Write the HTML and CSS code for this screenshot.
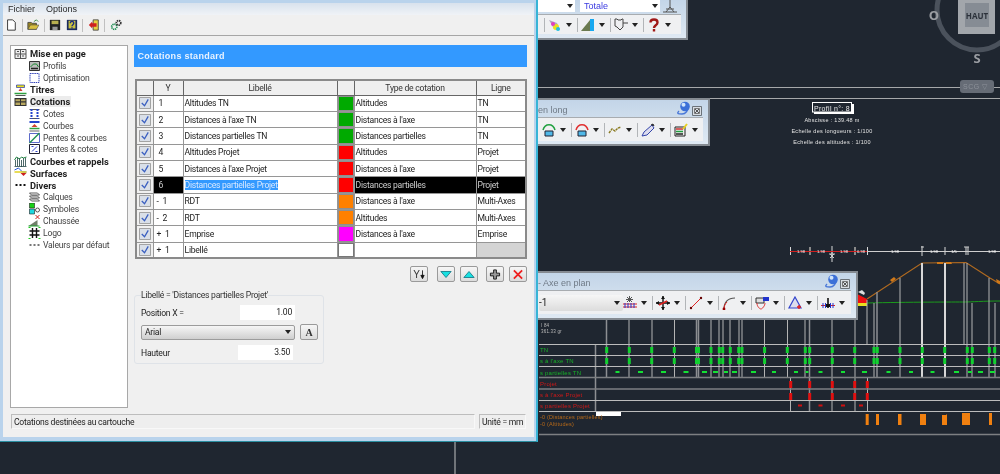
FILE: index.html
```html
<!DOCTYPE html>
<html lang="fr">
<head>
<meta charset="utf-8">
<title>Cotations standard</title>
<link rel="stylesheet" href="styles.css">
</head>
<body>
<svg class="sprite" width="0" height="0">
  <symbol id="i-new" viewBox="0 0 12 14"><path d="M2 1h6l3 3v9H2z" fill="#fff" stroke="#222"/></symbol>
  <symbol id="i-open" viewBox="0 0 14 14"><path d="M1 12V4h4l1 1h5v7z" fill="#9a8420" stroke="#444"/><path d="M1 12l3-5h10l-3 5z" fill="#d8c040" stroke="#444" stroke-width=".6"/><path d="M8 3l3-2 2 2" fill="none" stroke="#2a8030"/></symbol>
  <symbol id="i-save" viewBox="0 0 14 14"><path d="M1 1h12v12H1z" fill="#222"/><path d="M3 2h8v4H3z" fill="#b8b050"/><path d="M4 9h6v4H4z" fill="#999"/></symbol>
  <symbol id="i-helpsave" viewBox="0 0 14 14"><path d="M1 1h12v12H1z" fill="#1a2a60"/><path d="M3 2h8v9H3z" fill="#c8c040"/><path d="M5 5c0-3 4-3 4 0 0 2-2 1.500-2 3.500M7 9.500v1.500" fill="none" stroke="#1a2a80" stroke-width="1.600"/></symbol>
  <symbol id="i-exit" viewBox="0 0 14 14"><path d="M6 1h6v12H6z" fill="#e8d040" stroke="#444"/><path d="M1 7l4-4v2h5v4H5v2z" fill="#d02020"/></symbol>
  <symbol id="i-gears" viewBox="0 0 14 14"><circle cx="5" cy="9" r="3" fill="none" stroke="#1c8a50" stroke-width="2" stroke-dasharray="1.500 .8"/><circle cx="10" cy="4.500" r="2.600" fill="none" stroke="#333" stroke-width="2" stroke-dasharray="1.500 .8"/></symbol>

  <symbol id="t-grid" viewBox="0 0 12 12"><path d="M.5 1.500h11v9H.5zM.5 6h11M6 1.500v9M2.500 3.500h2M7.500 3.500h2M2.500 8h2M7.500 8h2" fill="#eee" stroke="#555"/></symbol>
  <symbol id="t-profils" viewBox="0 0 12 12"><path d="M1 1.500h10v9H1z" fill="#bbb" stroke="#333"/><path d="M2 7l3-3h3l2 3" fill="none" stroke="#1a8a30"/><path d="M2.500 8.500h7" stroke="#222" stroke-width="1.500"/></symbol>
  <symbol id="t-optim" viewBox="0 0 12 12"><path d="M1.500 1.500h9v9h-9z" fill="#fff" stroke="#3344bb" stroke-dasharray="1.500 .7"/></symbol>
  <symbol id="t-titres" viewBox="0 0 12 12"><path d="M2 1h8v2.500H2z" fill="#e8e020" stroke="#2233aa" stroke-width=".7"/><path d="M6 4l2 3H4z" fill="#d04030"/><path d="M0 9.500h12" stroke="#30a040" stroke-width="1.500"/><path d="M1 11.500h10" stroke="#555"/></symbol>
  <symbol id="t-cot" viewBox="0 0 12 12"><path d="M0 2h12v8H0z" fill="#333"/><path d="M1 3.200h4.500v2H1zM6.500 3.200H11v2H6.500zM1 6.500h4.500v2.500H1zM6.500 6.500H11v2.500H6.500z" fill="#b8a860"/></symbol>
  <symbol id="t-cotes" viewBox="0 0 12 12"><path d="M1 1.500h10M1 10.500h10" stroke="#555"/><path d="M3 1v10M9 1v10" stroke="#2244cc" stroke-width="2" stroke-dasharray="2 1"/></symbol>
  <symbol id="t-courbes" viewBox="0 0 12 12"><path d="M1 1h10v2H1z" fill="#2244cc"/><path d="M6 4l3 3H3z" fill="#d04030"/><path d="M1 8.500h10" stroke="#30a040" stroke-width="1.500"/><path d="M1 11h10" stroke="#666"/></symbol>
  <symbol id="t-pentec" viewBox="0 0 12 12"><path d="M1 1.500h10v9H1z" fill="#fff" stroke="#3344bb" stroke-width=".8"/><path d="M1 11L11 1" stroke="#209050" stroke-width="1.500"/></symbol>
  <symbol id="t-pentes" viewBox="0 0 12 12"><path d="M1 1.500h10v9H1z" fill="#fff" stroke="#223"/><path d="M3.500 8.500l5-5M3 3.500h2M7 8.500h2" stroke="#3344cc"/></symbol>
  <symbol id="t-rappels" viewBox="0 0 12 12"><path d="M0 11.500h12M1 5v6M3 3v8M5 3v8M7 5v8M9 3v8M11 3v8" stroke="#244" stroke-width=".8"/><path d="M0 5l2-3 3 2 2-2 2 1 3-1" fill="none" stroke="#208040"/></symbol>
  <symbol id="t-surf" viewBox="0 0 12 12"><path d="M0 3l4-2 4 4 4 0" fill="none" stroke="#2a5ad0"/><path d="M0 5h12" stroke="#e0d020" stroke-width="1.500"/><path d="M6 6h6l-3 3z" fill="#cc2020"/></symbol>
  <symbol id="t-dots" viewBox="0 0 12 12"><path d="M1 6h2M5 6h2M9 6h2" stroke="#111" stroke-width="2"/></symbol>
  <symbol id="t-calques" viewBox="0 0 12 12"><path d="M1 2h8l2 2H3zM1 5h8l2 2H3zM1 8h8l2 2H3z" fill="#fff" stroke="#333" stroke-width=".8"/></symbol>
  <symbol id="t-symb" viewBox="0 0 12 12"><path d="M1 0h5v5H1z" fill="#18d018" stroke="#222" stroke-width=".6"/><path d="M1 6h5v5H1z" fill="#20d8e0" stroke="#222" stroke-width=".6"/><circle cx="9" cy="7" r="2" fill="#fff" stroke="#555"/></symbol>
  <symbol id="t-chaus" viewBox="0 0 12 12"><path d="M0 11l9-6v6z" fill="#70806a"/><path d="M0 11h11" stroke="#20a030"/><path d="M7 0l4 4M11 0L7 4" stroke="#d02020"/></symbol>
  <symbol id="t-logo" viewBox="0 0 12 12"><path d="M4 1v10M8 1v10M1 4h10M1 8h10" stroke="#111" stroke-width="1.400"/><path d="M0 0h2v1H0zM10 0h2v1h-2zM0 11h2v1H0zM10 11h2v1h-2z" fill="#20d020"/></symbol>
  <symbol id="t-gdots" viewBox="0 0 12 12"><path d="M1 6h2M5 6h2M9 6h2" stroke="#777" stroke-width="1.800"/></symbol>

  <symbol id="w-colors" viewBox="0 0 14 14"><path d="M1 2l8 3 3 7-6-1z" fill="#b0a8c0"/><circle cx="8" cy="9" r="3" fill="#e8e020"/><circle cx="5" cy="6" r="2" fill="#e040c0"/><circle cx="10" cy="11" r="2" fill="#20c0e0"/></symbol>
  <symbol id="w-slope" viewBox="0 0 14 14"><path d="M0 13L9 2v11z" fill="#6a7a50"/><path d="M9 1h4v12H9z" fill="#18a8f0"/></symbol>
  <symbol id="w-flag" viewBox="0 0 14 14"><path d="M1 1h2l1 1h3l1-1h1v8l-3 3-3-3-2-1z" fill="none" stroke="#444"/><path d="M9 5h5" stroke="#444"/></symbol>
  <symbol id="w-q" viewBox="0 0 14 14"><path d="M3.500 4.500C3.500 .5 10.500.5 10.500 4.500c0 3-3.500 2.500-3.500 5.500M7 11v2.500" fill="none" stroke="#a01818" stroke-width="2.400"/></symbol>
  <symbol id="w-greenarc" viewBox="0 0 14 14"><path d="M1 7c2-7 10-7 12 0" fill="none" stroke="#20a040" stroke-width="1.500"/><path d="M3 8h8v5H3z" fill="#50b8e8" stroke="#223"/></symbol>
  <symbol id="w-redarc" viewBox="0 0 14 14"><path d="M1 7c2-7 10-7 12 0" fill="none" stroke="#e03030" stroke-width="1.500"/><path d="M3 8h8v5H3z" fill="#50b8e8" stroke="#223"/></symbol>
  <symbol id="w-wave" viewBox="0 0 14 14"><path d="M1 10l3-4 3 2 3-3 3-1" fill="none" stroke="#8a7a20" stroke-width="1.400" stroke-dasharray="2.500 .7"/></symbol>
  <symbol id="w-pen" viewBox="0 0 14 14"><path d="M1 13l2-4 8-7 2 3-7 7z" fill="#dde" stroke="#3344aa"/><path d="M10 2l2-1 1 2" stroke="#333"/></symbol>
  <symbol id="w-edit" viewBox="0 0 14 14"><path d="M1 4h10v9H1z" fill="#eee" stroke="#222"/><path d="M2 6h7" stroke="#d03030" stroke-width="1.500"/><path d="M2 8.500h7" stroke="#20a040" stroke-width="1.500"/><path d="M2 11h7" stroke="#222" stroke-width="1.500"/><path d="M9 6l4-5" stroke="#e8d020" stroke-width="2"/></symbol>
  <symbol id="w-dim" viewBox="0 0 14 14"><path d="M0 8h14M0 11h14" stroke="#e02020"/><path d="M2 7v5M5 7v5M8 7v5M11 7v5" stroke="#2233cc"/><path d="M4 1l5 5M9 1L4 6M6.500 0v6M3 3.500h7" stroke="#555"/></symbol>
  <symbol id="w-move" viewBox="0 0 14 14"><path d="M7 0v14M0 7h14" stroke="#111" stroke-width="1.400"/><path d="M7 0l2 3H5zM7 14l2-3H5zM0 7l3-2v4zM14 7l-3-2v4z" fill="#111"/><path d="M3 9l8-4" stroke="#e02020" stroke-width="1.400"/></symbol>
  <symbol id="w-line" viewBox="0 0 14 14"><path d="M2 12L12 2" stroke="#e02020"/><circle cx="2" cy="12" r="1.200" fill="#600"/><circle cx="12" cy="2" r="1.200" fill="#600"/></symbol>
  <symbol id="w-arc" viewBox="0 0 14 14"><path d="M2 13C2 6 6 2 13 2" fill="none" stroke="#555" stroke-width="1.200"/><path d="M2 13c0-3 1-5 3-7" fill="none" stroke="#e02020"/><circle cx="2" cy="13" r="1.400" fill="#900"/></symbol>
  <symbol id="w-shield" viewBox="0 0 14 14"><path d="M1 2h8v5H1z" fill="#ddd" stroke="#333"/><path d="M8 1h6v4H8z" fill="#2233cc"/><path d="M2 7c0 4 3 6 4 6s4-3 4-6" fill="none" stroke="#e03030"/></symbol>
  <symbol id="w-tri" viewBox="0 0 14 14"><path d="M7 1l6 11H1z" fill="#dde" stroke="#3344cc" stroke-width="1.200"/><path d="M9 11h4M11 9v4" stroke="#e02020" stroke-width="1.400"/></symbol>
  <symbol id="w-cross" viewBox="0 0 14 14"><path d="M0 9.500h14" stroke="#e02020"/><path d="M2 7v5M4.500 7v5M9.500 7v5M12 7v5" stroke="#2233cc"/><path d="M7 2v10" stroke="#111" stroke-width="1.600"/><path d="M5 8h4v3H5z" fill="#111"/></symbol>
  <symbol id="w-ball" viewBox="0 0 16 14"><path d="M3 10c-3 3 0 3 3 3 4 0 6-4 6-6" fill="none" stroke="#4a78d8" stroke-width="1.400"/><circle cx="9" cy="5.500" r="4.800" fill="#3c70d8"/><circle cx="7.500" cy="3.800" r="2" fill="#cfe4fb"/></symbol>
  <symbol id="w-close" viewBox="0 0 10 10"><path d="M.5.500h9v9h-9z" fill="#d8dde3" stroke="#6b7279"/><path d="M3 3l4 4M7 3L3 7" stroke="#555"/><path d="M2.500 2.500h5v5h-5z" fill="none" stroke="#777"/></symbol>
  <symbol id="w-road" viewBox="0 0 14 14"><path d="M7 0v8M0 12h14M3 9h8" stroke="#555"/><path d="M3 12l4-5 4 5" fill="none" stroke="#555"/></symbol>
  <symbol id="c-check" viewBox="0 0 13 13"><path d="M.5.500h12v12H.5z" fill="#d9dfe8" stroke="#9a9a9a"/><path d="M3 6.500l3 3 4-7" fill="none" stroke="#3a5fc0" stroke-width="1.400"/></symbol>
</svg>

<div class="screen">
  <svg class="cad" viewBox="0 0 1000 474" width="1000" height="474" role="img" aria-label="Profil en long">
    <path class="rule" d="M537 87.500h463M537 98.500h463"/>
    <circle class="ring" cx="977" cy="10" r="40"/>
    <rect class="haut" x="958" y="-2" width="37" height="36"/>
    <rect class="haut-in" x="965" y="3" width="24" height="24"/>
    <text class="cube" x="977" y="19" text-anchor="middle">HAUT</text>
    <text class="card" x="934" y="20" text-anchor="middle">O</text>
    <text class="card" x="977" y="63" text-anchor="middle">S</text>
    <rect class="pill" x="960" y="80" width="34" height="13" rx="3"/>
    <text class="pilltx" x="963" y="89">SCG ▽</text>

    <rect class="label-shadow" x="814" y="104" width="40" height="10"/>
    <rect class="label-box" x="812.500" y="102.500" width="39" height="9.500"/>
    <text class="lab" x="832" y="111" text-anchor="middle">Profil n°: 8</text>
    <text class="cap" x="832" y="121.500" text-anchor="middle">Abscisse : 139.48 m</text>
    <text class="cap" x="832" y="133" text-anchor="middle">Echelle des longueurs : 1/100</text>
    <text class="cap" x="832" y="144" text-anchor="middle">Echelle des altitudes : 1/100</text>

    <path class="v-w" d="M790.500 247v8M855 247v8M867.500 247v8M945 247v8M966 247v8M968 247v8M922 246v10M832 246v16"/>
    <path class="v-g" d="M810 247v8M855 247v8"/>
    <path class="dim-w" d="M867 251.500h133"/>
    <path class="dim-r" d="M790 251.500h77"/>
    <text class="tiny" x="801" y="253" text-anchor="middle">1.98</text>
    <text class="tiny" x="821" y="253" text-anchor="middle">1.98</text>
    <text class="tiny" x="844" y="253" text-anchor="middle">1.98</text>
    <text class="tiny" x="861" y="253" text-anchor="middle">0.98</text>
    <text class="tiny" x="895" y="253" text-anchor="middle">1.98</text>
    <text class="tiny" x="934" y="253" text-anchor="middle">1.98</text>
    <text class="tiny" x="954" y="253" text-anchor="middle">1/5</text>
    <text class="tiny" x="992" y="253" text-anchor="middle">1.98</text>
    <path class="sym" d="M829 254h6M832 252l0 6M830 254l4 4M834 254l-4 4M921 247h3M964 247h5"/>

    <path class="terrain" d="M867 303c40-1 90-1 97-1s20-1 36-1"/>
    <path class="fill-r" d="M857 294l10 5v4h-10z"/>
    <path class="fill-y" d="M857 303h10v3h-10z"/>
    <path class="fill-w" d="M858 292l4-2 3 3-1 2z"/>
    <path class="projet" d="M867 299l55-36 44-.500 24 15.500 10 6"/>
    <path class="blob" d="M890 280l4-3 2 2-4 3zM937 262h6v2h-6zM946 262h5l1 2h-6zM996 279l4 2v3l-3-1z"/>

    <path class="vl" d="M629 320v58M652 320v58M674.500 320v58M711 320v58M719 320v58M723 320v58M730 320v58M739 320v58M742 320v58M764.500 320v58M787.500 320v58M805 320v58M832 320v58M855 320v58M867 300v44M874 303v75M900 278v100M967 263v115M972 303v75M989 278v100M995 303v75M964 263v81"/>
    <path class="vg" d="M606.500 320v58M696.500 320v58M698.500 320v58M809.500 320v58M877 292v86"/>
    <path class="vt" d="M922 263v115M945 263v115"/>
    <path class="vl" d="M790.500 378v33M832 378v33M855 378v33M867.500 378v33"/>
    <path class="vg" d="M809.500 378v33M595.500 344v67"/>

    <path class="hl" d="M539 344.500h461M539 355.500h461M539 366.500h461M539 400.500h461M539 411.500h461"/>
    <path class="hg" d="M539 377.500h461M539 389h461M539 434.500h461"/>
    <rect class="white" x="596" y="412" width="25" height="4"/>

    <path class="gbar" d="M606.700 347v6M629.300 347v6M651.700 347v6M674.300 347v6M696.500 347v6M698.500 347v6M711 347v6M719.300 347v6M722.700 347v6M730.300 347v6M738.700 347v6M742 347v6M764.600 347v6M787.300 347v6M805.300 347v6M809.700 347v6M832.300 347v6M854.700 347v6M874 347v6M877.300 347v6M900 347v6M922.300 347v6M944.700 347v6M967.300 347v6M972.300 347v6M989.300 347v6M994.700 347v6"/>
    <path class="gbar" d="M606.700 358v6M629.300 358v6M651.700 358v6M674.300 358v6M696.500 358v6M698.500 358v6M711 358v6M719.300 358v6M722.700 358v6M730.300 358v6M738.700 358v6M742 358v6M764.600 358v6M787.300 358v6M805.300 358v6M809.700 358v6M832.300 358v6M854.700 358v6M874 358v6M877.300 358v6M900 358v6M922.300 358v6M944.700 358v6M967.300 358v6M972.300 358v6M989.300 358v6M994.700 358v6"/>
    <path class="gdash" d="M615.500 372h4M638 372h5M661 372h5M683.500 372h5M702 372h5M713 372h5M724 372h4M732 372h5M751 372h5M772 372h4M794 372h4M805.500 372h3M818.500 372h4M841 372h4M862 372h5M886.500 372h4M909 372h4M930.500 372h4M954 372h5M968 372h4M978 372h5M990 372h5"/>
    <path class="rbar" d="M790.700 381v7M809.700 381v7M832.300 381v7M854.700 381v7M867.300 381v7M790.700 393v7M809.700 393v7M832.300 393v7M854.700 393v7M867.300 393v7"/>
    <path class="rdash" d="M798 405.500h4M818.500 405.500h4M841 405.500h4M859 405.500h4"/>
    <path class="obar" d="M865.700 414h3v11h-3zM876 414h3v11h-3zM898 414h3.500v11H898zM920 414h6v11h-6zM942 415h4l1-1v11h-5zM962 413h8v12h-8zM989 413h3v12h-3z"/>

    <text class="tx-w" x="541" y="327">I 84</text>
    <text class="tx-w" x="541" y="333">361.33 gr</text>
    <text class="tx-g" x="540" y="352">TN</text>
    <text class="tx-g" x="540" y="363">s à l'axe TN</text>
    <text class="tx-g" x="540" y="375">s partielles TN</text>
    <text class="tx-r" x="540" y="386">Projet</text>
    <text class="tx-r" x="540" y="397">s à l'axe Projet</text>
    <text class="tx-r" x="540" y="408">s partielles Projet</text>
    <text class="tx-o" x="540" y="419">-0 (Distances partielles)</text>
    <text class="tx-o" x="540" y="426">-0 (Altitudes)</text>
    <path class="vg" d="M455 440v34"/>
  </svg>

  <section class="win win-a">
    <div class="selects">
      <div class="sel sel-a"><span class="arr"></span></div>
      <div class="sel sel-b">Totale<span class="arr"></span></div>
      <svg class="tool-ico road"><use href="#w-road"/></svg>
    </div>
    <div class="strip">
      <span class="sep"></span>
      <div class="tool"><svg class="tool-ico"><use href="#w-colors"/></svg><span class="arr"></span><span class="sep"></span></div>
      <div class="tool"><svg class="tool-ico"><use href="#w-slope"/></svg><span class="arr"></span><span class="sep"></span></div>
      <div class="tool"><svg class="tool-ico"><use href="#w-flag"/></svg><span class="arr"></span><span class="sep"></span></div>
      <div class="tool"><svg class="tool-ico"><use href="#w-q"/></svg><span class="arr"></span></div>
    </div>
  </section>

  <section class="win win-b">
    <header class="win-title">en long<svg class="ball"><use href="#w-ball"/></svg><svg class="close"><use href="#w-close"/></svg></header>
    <div class="strip">
      <div class="tool"><svg class="tool-ico"><use href="#w-greenarc"/></svg><span class="arr"></span><span class="sep"></span></div>
      <div class="tool"><svg class="tool-ico"><use href="#w-redarc"/></svg><span class="arr"></span><span class="sep"></span></div>
      <div class="tool"><svg class="tool-ico"><use href="#w-wave"/></svg><span class="arr"></span><span class="sep"></span></div>
      <div class="tool"><svg class="tool-ico"><use href="#w-pen"/></svg><span class="arr"></span><span class="sep"></span></div>
      <div class="tool"><svg class="tool-ico"><use href="#w-edit"/></svg><span class="arr"></span></div>
    </div>
  </section>

  <section class="win win-c">
    <header class="win-title">- Axe en plan<svg class="ball"><use href="#w-ball"/></svg><svg class="close"><use href="#w-close"/></svg></header>
    <div class="strip">
      <div class="combo">-1<span class="arr"></span></div>
      <div class="tool"><svg class="tool-ico"><use href="#w-dim"/></svg><span class="arr"></span><span class="sep"></span></div>
      <div class="tool"><svg class="tool-ico"><use href="#w-move"/></svg><span class="arr"></span><span class="sep"></span></div>
      <div class="tool"><svg class="tool-ico"><use href="#w-line"/></svg><span class="arr"></span><span class="sep"></span></div>
      <div class="tool"><svg class="tool-ico"><use href="#w-arc"/></svg><span class="arr"></span><span class="sep"></span></div>
      <div class="tool"><svg class="tool-ico"><use href="#w-shield"/></svg><span class="arr"></span><span class="sep"></span></div>
      <div class="tool"><svg class="tool-ico"><use href="#w-tri"/></svg><span class="arr"></span><span class="sep"></span></div>
      <div class="tool"><svg class="tool-ico"><use href="#w-cross"/></svg><span class="arr"></span></div>
    </div>
  </section>

  <main class="dialog">
    <div class="inner">
      <nav class="menu"><span>Fichier</span><span>Options</span></nav>
      <div class="bar">
        <svg class="bi"><use href="#i-new"/></svg><span class="bsep"></span>
        <svg class="bi"><use href="#i-open"/></svg><span class="bsep"></span>
        <svg class="bi"><use href="#i-save"/></svg><svg class="bi"><use href="#i-helpsave"/></svg><span class="bsep"></span>
        <svg class="bi"><use href="#i-exit"/></svg><span class="bsep"></span>
        <svg class="bi"><use href="#i-gears"/></svg>
      </div>
      <div class="content">
        <aside class="tree">
          <div class="node top"><svg class="ti"><use href="#t-grid"/></svg><b>Mise en page</b></div>
          <div class="node sub"><svg class="ti"><use href="#t-profils"/></svg><span>Profils</span></div>
          <div class="node sub"><svg class="ti"><use href="#t-optim"/></svg><span>Optimisation</span></div>
          <div class="node top"><svg class="ti"><use href="#t-titres"/></svg><b>Titres</b></div>
          <div class="node top"><svg class="ti"><use href="#t-cot"/></svg><b class="hi">Cotations</b></div>
          <div class="node sub"><svg class="ti"><use href="#t-cotes"/></svg><span>Cotes</span></div>
          <div class="node sub"><svg class="ti"><use href="#t-courbes"/></svg><span>Courbes</span></div>
          <div class="node sub"><svg class="ti"><use href="#t-pentec"/></svg><span>Pentes &amp; courbes</span></div>
          <div class="node sub"><svg class="ti"><use href="#t-pentes"/></svg><span>Pentes &amp; cotes</span></div>
          <div class="node top"><svg class="ti"><use href="#t-rappels"/></svg><b>Courbes et rappels</b></div>
          <div class="node top"><svg class="ti"><use href="#t-surf"/></svg><b>Surfaces</b></div>
          <div class="node top"><svg class="ti"><use href="#t-dots"/></svg><b>Divers</b></div>
          <div class="node sub"><svg class="ti"><use href="#t-calques"/></svg><span>Calques</span></div>
          <div class="node sub"><svg class="ti"><use href="#t-symb"/></svg><span>Symboles</span></div>
          <div class="node sub"><svg class="ti"><use href="#t-chaus"/></svg><span>Chaussée</span></div>
          <div class="node sub"><svg class="ti"><use href="#t-logo"/></svg><span>Logo</span></div>
          <div class="node sub"><svg class="ti"><use href="#t-gdots"/></svg><span>Valeurs par défaut</span></div>
        </aside>
        <section class="panel">
          <h1 class="heading">Cotations standard</h1>
          <table class="grid">
            <colgroup><col class="c1"><col class="c2"><col class="c3"><col class="c4"><col class="c5"><col class="c6"></colgroup>
            <thead><tr><th></th><th>Y</th><th>Libellé</th><th></th><th>Type de cotation</th><th>Ligne</th></tr></thead>
            <tbody>
              <tr><td class="chk"><svg><use href="#c-check"/></svg></td><td class="y">1</td><td>Altitudes TN</td><td class="sw green"></td><td>Altitudes</td><td>TN</td></tr>
              <tr><td class="chk"><svg><use href="#c-check"/></svg></td><td class="y">2</td><td>Distances à l'axe TN</td><td class="sw green"></td><td>Distances à l'axe</td><td>TN</td></tr>
              <tr><td class="chk"><svg><use href="#c-check"/></svg></td><td class="y">3</td><td>Distances partielles TN</td><td class="sw green"></td><td>Distances partielles</td><td>TN</td></tr>
              <tr><td class="chk"><svg><use href="#c-check"/></svg></td><td class="y">4</td><td>Altitudes Projet</td><td class="sw red"></td><td>Altitudes</td><td>Projet</td></tr>
              <tr><td class="chk"><svg><use href="#c-check"/></svg></td><td class="y">5</td><td>Distances à l'axe Projet</td><td class="sw red"></td><td>Distances à l'axe</td><td>Projet</td></tr>
              <tr><td class="chk"><svg><use href="#c-check"/></svg></td><td class="y on">6</td><td><span class="selected">Distances partielles Projet</span></td><td class="sw red"></td><td class="on">Distances partielles</td><td class="on">Projet</td></tr>
              <tr><td class="chk"><svg><use href="#c-check"/></svg></td><td class="y s">-&nbsp; 1</td><td>RDT</td><td class="sw orange"></td><td>Distances à l'axe</td><td>Multi-Axes</td></tr>
              <tr><td class="chk"><svg><use href="#c-check"/></svg></td><td class="y s">-&nbsp; 2</td><td>RDT</td><td class="sw orange"></td><td>Altitudes</td><td>Multi-Axes</td></tr>
              <tr><td class="chk"><svg><use href="#c-check"/></svg></td><td class="y s">+&nbsp; 1</td><td>Emprise</td><td class="sw magenta"></td><td>Distances à l'axe</td><td>Emprise</td></tr>
              <tr><td class="chk"><svg><use href="#c-check"/></svg></td><td class="y s">+&nbsp; 1</td><td>Libellé</td><td class="sw blank"></td><td></td><td class="off"></td></tr>
            </tbody>
          </table>
          <div class="actions">
            <button class="btn b-y" type="button">Y<svg viewBox="0 0 6 12"><path d="M3 1v8M1 7l2 4 2-4z" stroke="#111" fill="#111"/></svg></button>
            <button class="btn b-down" type="button"><svg viewBox="0 0 14 9"><path d="M1 1h12L7 8z" fill="#18e0e0" stroke="#157a88"/></svg></button>
            <button class="btn b-up" type="button"><svg viewBox="0 0 14 9"><path d="M1 8h12L7 1z" fill="#18e0e0" stroke="#157a88"/></svg></button>
            <button class="btn b-add" type="button"><svg viewBox="0 0 12 12"><path d="M4.500 1h3v3.500H11v3H7.500V11h-3V7.500H1v-3h3.500z" fill="#999" stroke="#111"/></svg></button>
            <button class="btn b-del" type="button"><svg viewBox="0 0 12 12"><path d="M1.500 1.500l9 9M10.500 1.500l-9 9" stroke="#ee2020" stroke-width="2"/></svg></button>
          </div>
          <fieldset class="props">
            <legend>Libellé = 'Distances partielles Projet'</legend>
            <div class="prow r1"><label>Position X =</label><div class="num">1.00</div></div>
            <div class="prow r2"><div class="font">Arial<span class="arr"></span></div><button class="btn b-a" type="button">A</button></div>
            <div class="prow r3"><label>Hauteur</label><div class="num">3.50</div></div>
          </fieldset>
        </section>
      </div>
      <footer class="status"><div class="cell wide">Cotations destinées au cartouche</div><div class="cell unit">Unité = mm</div></footer>
    </div>
  </main>
</div>
</body>
</html>
```

FILE: styles.css
```css
* { box-sizing: border-box; }
html, body { margin: 0; padding: 0; width: 1000px; height: 474px; overflow: hidden; background: #1f2630; }
body { font: 8.600px Roboto, "Liberation Sans", sans-serif; color: #222; }
.sprite { position: absolute; }
.screen { position: relative; width: 1000px; height: 474px; background: #1f2630; overflow: hidden; filter: blur(.35px); }

/* CAD canvas */
.cad { position: absolute; left: 0; top: 0; }
.cad path, .cad circle { fill: none; }
.rule { stroke: #a6a8aa; }
.ring { stroke: #4b525c; stroke-width: 5px; }
.cad .haut { fill: #a2a6ab; }
.cad .haut-in { fill: #868c94; }
.cube { font: bold 8px "Open Sans", sans-serif; fill: #2c323b; }
.card { font: bold 13px "Open Sans", sans-serif; fill: #9a9da2; }
.pill { fill: #666c76; }
.pilltx { font: 7px "Liberation Sans", sans-serif; fill: #8d929a; letter-spacing: .5px; }
.label-shadow { fill: #fff; }
.label-box { fill: #1f2630; stroke: #fff; }
.lab { font: 7px "Liberation Sans", sans-serif; fill: #e8e8e8; letter-spacing: .3px; }
.cap { font: 5.500px "Liberation Sans", sans-serif; fill: #e4e4e4; letter-spacing: .3px; }
.v-w { stroke: #d8d8d8; }
.v-g { stroke: #8a8a8a; stroke-width: 2px; }
.dim-w { stroke: #cfcfcf; }
.dim-r { stroke: #d02020; }
.tiny { font: 4px "Liberation Sans", sans-serif; fill: #fff; }
.sym { stroke: #ccc; }
.terrain { stroke: #1c9a1c; }
.cad .fill-r { fill: #ee1111; }
.cad .fill-y { fill: #e8e020; }
.cad .fill-w { fill: #ddd; }
.projet { stroke: #b06a20; stroke-width: 1.200px; }
.cad .blob { fill: #d07818; }
.vl { stroke: #b4b4b4; }
.vg { stroke: #8d8f92; stroke-width: 1.500px; }
.vt { stroke: #d8d8d8; stroke-width: 2px; }
.hl { stroke: #bcbcbc; }
.hg { stroke: #7d7f82; stroke-width: 1.500px; }
.white { fill: #fff; }
.gbar { stroke: #12d030; stroke-width: 3px; }
.gdash { stroke: #14e034; stroke-width: 2px; }
.rbar { stroke: #e01010; stroke-width: 3px; }
.rdash { stroke: #d01010; stroke-width: 2px; }
.cad .obar { fill: #f08010; }
.tx-w, .tx-g, .tx-r, .tx-o { font: 6px "Liberation Sans", sans-serif; letter-spacing: .2px; }
.tx-w { fill: #bbb; font-size: 4.500px; }
.tx-g { fill: #18b028; }
.tx-r { fill: #d01818; }
.tx-o { fill: #b86a18; font-size: 5.500px; }

/* floating toolbars */
.win { position: absolute; background: linear-gradient(#c3d5e8, #dfe9f3); border-right: 2px solid #858b92; border-bottom: 2px solid #858b92; border-top: 2px solid #858b92; display: flex; flex-direction: column; }
.win-a { left: 500px; top: -2px; width: 188px; height: 42px; }
.win-b { left: 500px; top: 98px; width: 210px; height: 48px; }
.win-c { left: 500px; top: 271px; width: 358px; height: 49px; }
.win-title { height: 17px; padding-left: 38px; font: 9px/20px "Liberation Sans", sans-serif; color: #6f7a86; position: relative; }
.ball { position: absolute; right: 16px; top: 1px; width: 16px; height: 14px; }
.close { position: absolute; right: 6px; top: 6px; width: 10px; height: 10px; }
.strip { display: flex; align-items: center; background: #eff0f2; border-top: 1px solid #a8acb0; margin-right: 5px; }
.win-a .strip { height: 20px; padding-left: 44px; }
.win-b .strip { height: 24px; padding-left: 41px; }
.win-c .strip { height: 24px; padding-left: 39px; }
.tool { display: flex; align-items: center; flex: none; width: 33px; }
.tool-ico { width: 16px; height: 14px; flex: none; }
.arr { flex: none; width: 0; height: 0; margin-left: 3px; border: 3px solid transparent; border-top: 4px solid #222; border-bottom: 0; }
.sep { flex: none; width: 1px; height: 14px; background: #b2b5b8; margin-left: 5px; }
.win-a .strip > .sep { margin: 0 2px 0 0; }
.selects { height: 14px; flex: none; display: flex; align-items: flex-start; padding-left: 30px; }
.sel { background: #fff; height: 12px; display: flex; align-items: center; justify-content: flex-end; padding-right: 2px; }
.sel-a { width: 45px; }
.sel-b { width: 80px; margin-left: 5px; font: 9px "Liberation Sans", sans-serif; color: #3a3ae0; justify-content: space-between; padding-left: 4px; }
.road { width: 14px; margin-left: 3px; }
.combo { flex: none; width: 84px; height: 16px; margin-right: -1px; padding: 0 3px 0 0; display: flex; align-items: center; justify-content: space-between; font-size: 10px; background: linear-gradient(#f6f6f6, #dcdcdc); border-radius: 2px; }

/* dialog */
.dialog { position: absolute; left: 0; top: 0; width: 538px; height: 442px; padding: 3px 2px 4px 3px; background: #b9d3ec; border-right: 2px solid #38b4d6; border-bottom: 1px solid #2a8ea0; }
.inner { height: 100%; background: #f0f0f0; display: flex; flex-direction: column; }
.menu { height: 12px; flex: none; display: flex; gap: 11px; padding-left: 5px; align-items: center; background: linear-gradient(#d8e2ed, #f0f3f7); font: 9px "Liberation Sans", sans-serif; color: #2a2a2a; }
.bar { height: 21px; flex: none; display: flex; align-items: center; gap: 4.500px; padding-left: 2px; border-bottom: 1px solid #a6a6a6; }
.bi { width: 12px; height: 12px; flex: none; }
.bsep { width: 1px; height: 13px; background: #c0c0c0; flex: none; }
.content { flex: 1; display: flex; padding: 9px 7px 0; gap: 6px; min-height: 0; }
.tree { width: 118px; height: 363px; flex: none; background: #fff; border: 1px solid #a8a8a8; padding-top: 2px; }
.node { height: 11.950px; display: flex; align-items: center; white-space: nowrap; }
.ti { width: 13px; height: 12px; flex: none; }
.top { padding-left: 3px; }
.top b { margin-left: 3px; font-size: 9.300px; }
.hi { background: #ececec; padding-right: 1px; }
.sub { padding-left: 17px; color: #444; letter-spacing: -.2px; }
.sub span { margin-left: 2px; }
.panel { width: 393px; flex: none; display: flex; flex-direction: column; }
.heading { margin: 0; height: 22px; background: #3399ff; color: #e8f2ff; font: bold 9px/22px "Liberation Sans", sans-serif; letter-spacing: .3px; padding-left: 3.500px; }
.grid { table-layout: fixed; width: 392px; margin: 12px 0 0 1px; border-collapse: collapse; border: 2px solid #8a8a8a; background: #fff; letter-spacing: -.25px; }
.c1 { width: 17px; } .c2 { width: 30px; } .c3 { width: 154px; } .c4 { width: 17px; } .c5 { width: 122px; } .c6 { width: 50px; }
.grid th { height: 15px; padding: 0; font-weight: 400; text-align: center; background: #efefef; border: 1px solid #666; color: #333; }
.grid td { height: 16.350px; padding: 0 0 0 1px; border: 1px solid #969696; white-space: nowrap; overflow: hidden; }
.chk { padding: 0 !important; text-align: center; background: #f0f0f0; }
.chk svg { display: block; width: 12px; height: 12px; margin: auto; }
.y { padding-left: 5px !important; }
.y.s { padding-left: 3px !important; }
.on { background: #000; color: #ccc; }
.selected { background: #3399ff; color: #d8e8ff; display: inline-block; }
.sw { background-clip: padding-box; box-shadow: inset 0 0 0 1px #8f8f8f; }
.green { background-color: #00aa00; }
.red { background-color: #ff0000; }
.orange { background-color: #ff8000; }
.magenta { background-color: #ff00ff; }
.blank { background-color: #fff; box-shadow: inset 0 0 0 1px #777; }
.off { background: #d4d4d4; }
.actions { display: flex; justify-content: flex-end; margin: 7px 0 0; height: 16px; }
.btn { flex: none; width: 18px; height: 16px; padding: 0; display: flex; align-items: center; justify-content: center; border: 1px solid #9a9a9a; border-radius: 2px; background: linear-gradient(#f6f6f6, #dcdcdc); font: 10px "Liberation Sans", sans-serif; color: #333; }
.btn svg { width: 12px; height: 11px; }
.b-y svg { width: 5px; }
.b-down { margin-left: 9px; }
.b-up { margin-left: 5px; }
.b-add { margin-left: 8px; }
.b-del { margin-left: 5px; }
.props { width: 190px; height: 73px; margin: 9px 0 0; padding: 0 0 0 6px; border: 1px solid #dfe3e8; border-radius: 3px; letter-spacing: -.25px; }
.props legend { padding: 0; line-height: 9px; color: #333; }
.prow { display: flex; align-items: center; justify-content: space-between; }
.r1 { height: 15px; margin-top: 5px; width: 154px; }
.r2 { height: 16px; margin-top: 4px; width: 177px; }
.r3 { height: 15px; margin-top: 5px; width: 152px; }
.num { width: 55px; height: 15px; background: #fff; text-align: right; line-height: 15px; padding-right: 3px; }
.font { width: 154px; height: 15px; display: flex; align-items: center; justify-content: space-between; padding: 0 3px; background: linear-gradient(#f6f6f6, #cfcfcf); border: 1px solid #9c9c9c; border-radius: 2px; }
.b-a { font: bold 10px "Liberation Serif", serif; }
.status { display: flex; height: 15px; margin: auto 8px 8.500px 8px; gap: 4px; flex: none; letter-spacing: -.25px; }
.cell { height: 15px; border: 1px solid; border-color: #bdbdbd #f8f8f8 #f8f8f8 #bdbdbd; line-height: 14px; padding-left: 2px; background: #eeeeee; white-space: nowrap; }
.wide { width: 464px; }
.unit { width: 47px; }
```
